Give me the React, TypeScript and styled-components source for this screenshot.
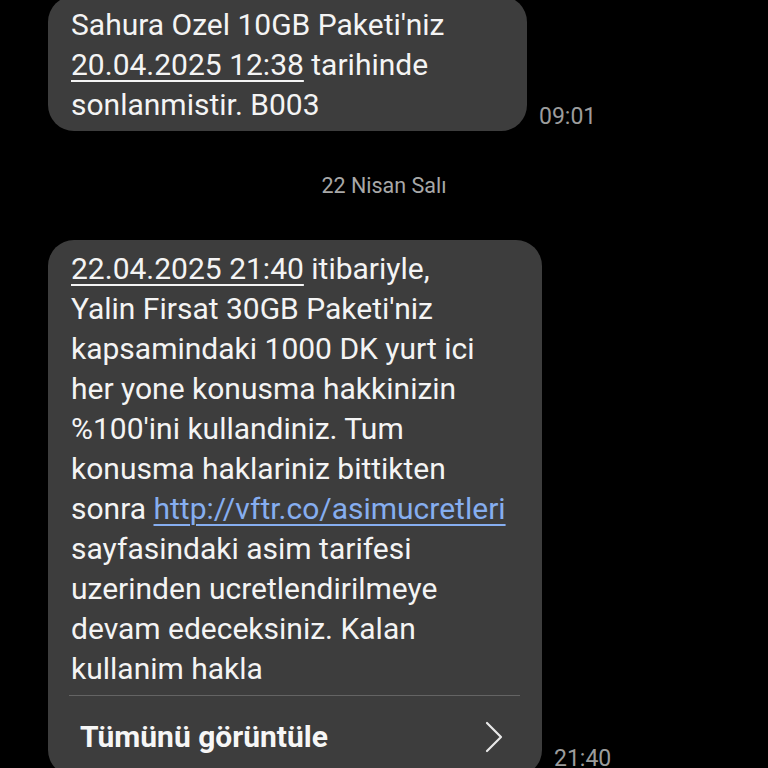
import styled, { createGlobalStyle } from 'styled-components'

const GlobalStyle = createGlobalStyle`
  html, body {
    margin: 0;
    padding: 0;
    background: #000;
  }
  body {
    width: 768px;
    height: 768px;
    overflow: hidden;
    font-family: Roboto, "Noto Sans", sans-serif;
  }
`

const Thread = styled.main`
  display: flex;
  flex-direction: column;
  padding-left: 48px;
  margin-top: -4px;
`

const Row = styled.div`
  display: flex;
  align-items: flex-end;
  gap: 12px;
`

const Bubble = styled.div<{ $width: number }>`
  width: ${(p) => p.$width}px;
  box-sizing: border-box;
  background: #3d3d3d;
  border-radius: 26px;
  color: #f4f4f4;
  font-size: 30px;
  line-height: 40px;
`

const Body = styled.div`
  padding: 9px 16px 6px 23px;
`

const Line = styled.div`
  white-space: nowrap;
`

const DateLink = styled.span`
  text-decoration: underline;
  text-decoration-thickness: 1.5px;
  text-underline-offset: 5px;
`

const UrlLink = styled.a`
  color: #86aef0;
  text-decoration: underline;
  text-decoration-thickness: 1.5px;
  text-underline-offset: 5px;
`

const Footer = styled.div`
  margin: 0 22px 0 21px;
  border-top: 1px solid #646464;
  height: 78px;
  display: flex;
  align-items: center;
  justify-content: space-between;
  padding: 2px 16px 0 11px;
`

const FooterLabel = styled.span`
  font-weight: 700;
  font-size: 30px;
  color: #f6f6f6;
`

const Time = styled.span<{ $lift: number }>`
  color: #9c9c9c;
  font-size: 23px;
  margin-bottom: ${(p) => p.$lift}px;
`

const DayLabel = styled.div`
  text-align: center;
  color: #a8a8a8;
  font-size: 21.5px;
  padding: 42px 0 42px;
  margin-left: -48px;
`

export default function App() {
  return (
    <>
      <GlobalStyle />
      <Thread>
        <Row>
          <Bubble $width={479}>
            <Body>
              <Line>Sahura Ozel 10GB Paketi'niz</Line>
              <Line>
                <DateLink>20.04.2025 12:38</DateLink> tarihinde
              </Line>
              <Line>sonlanmistir. B003</Line>
            </Body>
          </Bubble>
          <Time $lift={1}>09:01</Time>
        </Row>
        <DayLabel>22 Nisan Salı</DayLabel>
        <Row>
          <Bubble $width={494}>
            <Body>
              <Line>
                <DateLink>22.04.2025 21:40</DateLink> itibariyle,
              </Line>
              <Line>Yalin Firsat 30GB Paketi'niz</Line>
              <Line>kapsamindaki 1000 DK yurt ici</Line>
              <Line>her yone konusma hakkinizin</Line>
              <Line>%100'ini kullandiniz. Tum</Line>
              <Line>konusma haklariniz bittikten</Line>
              <Line>
                sonra <UrlLink href="#">http://vftr.co/asimucretleri</UrlLink>
              </Line>
              <Line>sayfasindaki asim tarifesi</Line>
              <Line>uzerinden ucretlendirilmeye</Line>
              <Line>devam edeceksiniz. Kalan</Line>
              <Line>kullanim hakla</Line>
            </Body>
            <Footer>
              <FooterLabel>Tümünü görüntüle</FooterLabel>
              <svg width="20" height="32" viewBox="0 0 20 32" fill="none">
                <path d="M3 2 L17 16 L3 30" stroke="#e8e8e8" strokeWidth="2.2" strokeLinecap="round" strokeLinejoin="round" />
              </svg>
            </Footer>
          </Bubble>
          <Time $lift={4}>21:40</Time>
        </Row>
      </Thread>
    </>
  )
}
